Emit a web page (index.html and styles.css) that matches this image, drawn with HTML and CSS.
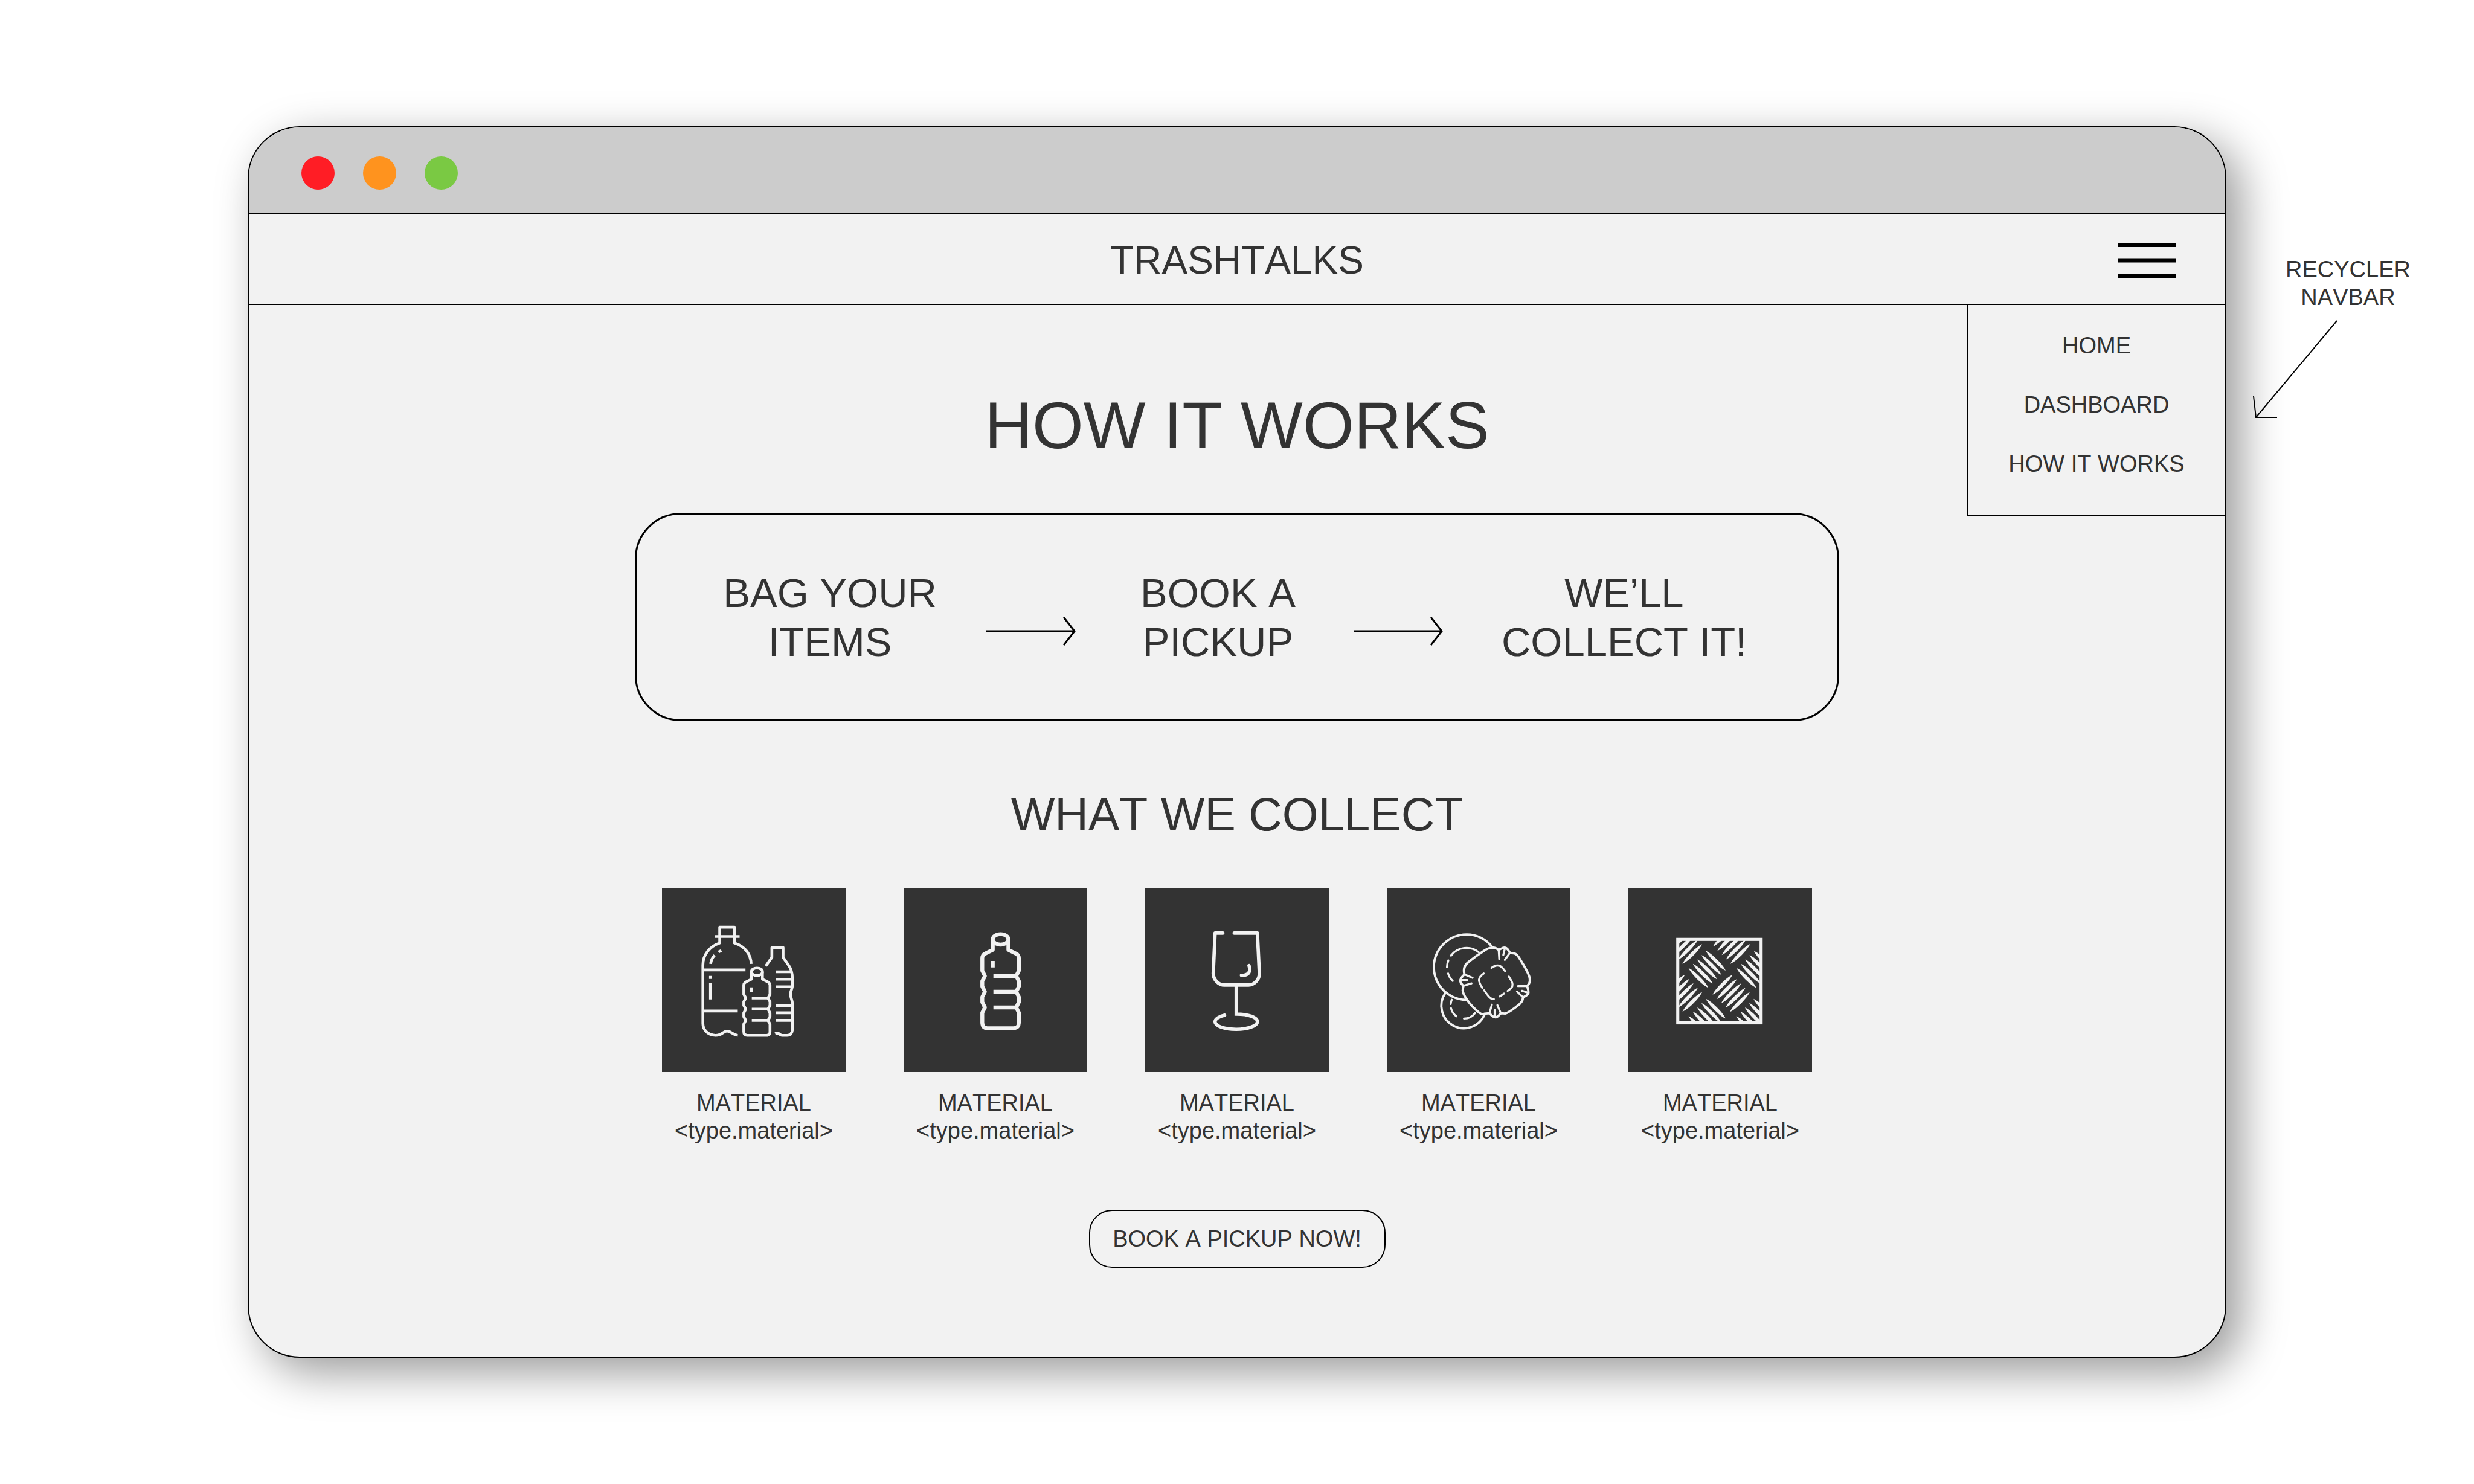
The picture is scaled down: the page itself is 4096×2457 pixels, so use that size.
FILE: index.html
```html
<!DOCTYPE html>
<html lang="en">
<head>
<meta charset="utf-8">
<title>Trashtalks – How it works</title>
<link rel="stylesheet" href="styles.css">
</head>
<body>
<div class="stage">
  <div class="window">
    <div class="titlebar">
      <span class="dot dot-close"></span>
      <span class="dot dot-minimise"></span>
      <span class="dot dot-zoom"></span>
    </div>

    <header class="header">
      <a class="brand" href="#">TRASHTALKS</a>
      <button class="menu-button" type="button" aria-label="Menu" aria-expanded="true">
        <svg viewBox="0 0 96 58" aria-hidden="true"><path d="M0 3.5H96M0 29H96M0 54.5H96"/></svg>
      </button>
      <nav class="menu">
        <a href="#">HOME</a>
        <a href="#">DASHBOARD</a>
        <a href="#">HOW IT WORKS</a>
      </nav>
    </header>

    <main class="main">
      <h1 class="page-title">HOW IT WORKS</h1>

      <div class="steps">
        <p class="step">BAG YOUR<br>ITEMS</p>
        <svg class="step-arrow" viewBox="0 0 148 50" aria-hidden="true"><path d="M0 25H145M128 2L146 25L128 48"/></svg>
        <p class="step">BOOK A<br>PICKUP</p>
        <svg class="step-arrow" viewBox="0 0 148 50" aria-hidden="true"><path d="M0 25H145M128 2L146 25L128 48"/></svg>
        <p class="step">WE’LL<br>COLLECT IT!</p>
      </div>

      <h2 class="section-title">WHAT WE COLLECT</h2>

      <div class="materials">
        <figure class="material">
          <svg class="tile" viewBox="22 19 1190 1190" aria-hidden="true">
            <g stroke-width="18">
              <g stroke-linejoin="round">
                <path d="M600 508C598 445 560 395 492 373V270H396V373C330 395 287 450 287 515V895C287 940 325 971 369 971C415 971 416 944 444 944S478 968 513 971"/>
                <path d="M602 559V607L566 625Q552 633 552 645V705L565 729L552 753V777L565 801L552 826V850L565 874L552 898V948Q552 971 575 971H700Q722 971 722 948V898L709 874L722 850V826L709 801L722 777V753L709 729L722 705V645Q722 633 708 625L673 607V559"/>
                <path d="M695 521L734 466V402H807V466L843 517Q867 552 867 600V650C867 670 855 680 855 705S867 740 867 765V937Q863 971 833 971H800C785 971 785 957 769 957Q760 957 755 959"/>
              </g>
              <ellipse cx="637.500" cy="559" rx="36" ry="24.500"/>
              <path d="M363 330H525M287 547H563M287 813H513M604 729H709M604 801H709M604 874H709M602 660V690"/>
              <path d="M760 559H862M760 607H867M760 656H862M760 777H867M760 825H867M760 874H867"/>
              <path d="M336 586V605M336 634V738M337 508C340 485 350 465 363 452M388 431L407 421"/>
            </g>
          </svg>
          <figcaption>MATERIAL<br>&lt;type.material&gt;</figcaption>
        </figure>

        <figure class="material">
          <svg class="tile" viewBox="24 19 1190 1190" aria-hidden="true">
            <g stroke-width="25">
              <path stroke-linejoin="round" d="M602 349V417L553 441Q534 450 534 470V552L551 586L534 620V654L551 688L534 722V756L551 790L534 824V890Q536 924 566 925H740Q770 922 771 890V824L754 790L771 756V722L754 688L771 654V620L754 586L771 552V470Q771 450 752 441L703 417V349"/>
              <ellipse cx="652.500" cy="349" rx="51" ry="34"/>
              <path d="M606 586H754M606 688H754M606 790H754M602 489V531"/>
            </g>
          </svg>
          <figcaption>MATERIAL<br>&lt;type.material&gt;</figcaption>
        </figure>

        <figure class="material">
          <svg class="tile" viewBox="27 19 1190 1190" aria-hidden="true">
            <g stroke-width="22" stroke-linecap="round">
              <path stroke-linejoin="round" d="M530 308H480L468 570C468 610 504 645 540 645H697C732 645 768 610 767 570L754 308H604"/>
              <path d="M617 645V833C700 833 754 855 754 882S695 932 617 932S480 910 480 882C480 865 505 848 542 840"/>
              <path d="M700 519C712 558 700 582 651 582"/>
            </g>
          </svg>
          <figcaption>MATERIAL<br>&lt;type.material&gt;</figcaption>
        </figure>

        <figure class="material">
          <svg class="tile" viewBox="30 19 1190 1190" aria-hidden="true">
            <g stroke-width="15" stroke-linecap="round" stroke-linejoin="round">
              <path d="M715 400A212 212 0 1 0 548 741M408 698A146 146 0 1 0 663 838"/>
              <path d="M715 403Q690 402 665 420Q610 455 560 495Q520 525 533 576L518 592Q500 612 510 632L526 650L522 680Q522 700 550 741Q580 785 630 825Q645 838 663 831L695 828L712 845Q735 862 753 845L769 828L797 830Q815 826 870 785Q912 757 913 725Q935 715 945 703Q950 695 947 680L940 652L952 635Q960 620 955 595Q945 560 895 480Q875 445 858 440L828 436L815 415Q800 397 780 405L755 417L735 405Q725 402 715 403Z"/>
              <g stroke-width="13">
                <path d="M446 454A126 126 0 0 1 625 432M429 485Q420 510 420 530M427 570Q437 600 457 618M451 740Q445 755 444 768M446 795Q455 830 481 847M530 862Q575 862 602 826"/>
                <path d="M755 417L759 478M796 405L785 450M828 436L795 482M533 576L586 598M510 613H552M526 650L579 634M880 652H940M906 682L945 695M874 687L913 724M695 828L711 772M729 850V806M769 828L747 776"/>
                <path d="M708 534Q740 510 765 522Q775 527 798 556M821 590L838 618Q852 645 838 662Q830 673 813 683M790 700L762 719M724 736Q705 736 690 718Q675 700 661 679M649 663Q628 630 627 612Q628 590 658 570"/>
              </g>
            </g>
          </svg>
          <figcaption>MATERIAL<br>&lt;type.material&gt;</figcaption>
        </figure>

        <figure class="material">
          <svg class="tile" viewBox="32 19 1190 1190" aria-hidden="true">
            <defs>
              <path id="rib" d="M-64 64C-47 25 25 -47 64 -64C47 -25 -25 47 -64 64Z"/>
              <g id="ribs">
                <use href="#rib" x="-56" y="-56"/><use href="#rib" x="-28" y="-28"/><use href="#rib"/><use href="#rib" x="28" y="28"/><use href="#rib" x="56" y="56"/>
              </g>
              <clipPath id="plate"><rect x="352" y="349" width="540" height="541"/></clipPath>
            </defs>
            <g class="ribs" clip-path="url(#plate)">
              <use href="#ribs" x="390" y="388"/>
              <use href="#ribs" x="701" y="387"/>
              <use href="#ribs" x="698" y="699"/>
              <use href="#ribs" x="390" y="698"/>
              <use href="#ribs" transform="translate(542 543) scale(-1 1)"/>
              <use href="#ribs" transform="translate(853 543) scale(-1 1)"/>
              <use href="#ribs" transform="translate(542 854) scale(-1 1)"/>
              <use href="#ribs" transform="translate(851 854) scale(-1 1)"/>
            </g>
            <rect stroke-width="20" x="352" y="349" width="540" height="541"/>
          </svg>
          <figcaption>MATERIAL<br>&lt;type.material&gt;</figcaption>
        </figure>
      </div>

      <button class="book-button" type="button">BOOK A PICKUP NOW!</button>
    </main>
  </div>

  <aside class="note">
    <p>RECYCLER<br>NAVBAR</p>
    <svg class="note-arrow" viewBox="0 0 144 166" aria-hidden="true"><path d="M140 2L6 162M2 127L6 162H41"/></svg>
  </aside>
</div>
</body>
</html>
```
FILE: styles.css
```css
* {
  box-sizing: border-box;
  margin: 0;
  padding: 0;
}

body {
  background: #fff;
  color: #333;
  font-family: "Liberation Sans", Arial, sans-serif;
  font-size: 38px;
  font-kerning: none;
  line-height: 46px;
}

a {
  color: inherit;
  text-decoration: none;
}

button {
  background: none;
  border: 0;
  color: inherit;
  font: inherit;
  font-kerning: inherit;
}

svg {
  display: block;
  fill: none;
  stroke: #000;
}

.stage {
  display: grid;
  grid-template-columns: 410fr 3276fr 410fr;
  padding: 209px 0;
}

/* Browser window */
.window {
  grid-column: 2;
  background: #f2f2f2;
  border: 2px solid #000;
  border-radius: 86px;
  box-shadow: 24px 24px 74px rgba(0, 0, 0, 0.4);
}

.titlebar {
  display: flex;
  align-items: center;
  gap: 47px;
  height: 143px;
  padding: 10px 87px 0;
  background: #ccc;
  border-bottom: 2px solid #000;
  border-radius: 84px 84px 0 0;
}

.dot {
  width: 55px;
  height: 55px;
  border-radius: 50%;
}

.dot-close { background: #ff1d25; }
.dot-minimise { background: #ff931e; }
.dot-zoom { background: #7ac943; }

.header {
  position: relative;
  display: grid;
  grid-template-columns: 1fr auto 1fr;
  align-items: center;
  height: 151px;
  padding: 5px 82px 0;
  border-bottom: 2px solid #000;
}

.brand {
  grid-column: 2;
  font-size: 64px;
  line-height: 80px;
}

.menu-button {
  justify-self: end;
  width: 96px;
  cursor: pointer;
}

.menu-button svg {
  width: 96px;
  height: 58px;
  stroke-width: 7px;
}

.menu {
  position: absolute;
  top: 100%;
  right: 0;
  display: flex;
  flex-direction: column;
  align-items: center;
  gap: 52px;
  width: 428px;
  height: 351px;
  padding-top: 44px;
  background: #f2f2f2;
  border: 2px solid #000;
  border-right: 0;
}

/* Page content */
.main {
  display: flex;
  flex-direction: column;
  align-items: center;
  padding: 134px 0 147px;
}

.page-title {
  font-size: 109px;
  font-weight: 400;
  line-height: 130px;
}

.steps {
  display: grid;
  grid-template-columns: 440fr 226fr 392fr 205fr 542fr;
  align-items: center;
  justify-items: center;
  width: 1994px;
  max-width: 100%;
  height: 345px;
  margin-top: 80px;
  padding: 0 82px 0 100px;
  border: 3px solid #000;
  border-radius: 76px;
}

.step {
  font-size: 67px;
  line-height: 81px;
  text-align: center;
}

.step-arrow {
  width: 148px;
  height: 50px;
  margin-top: 46px;
  stroke-width: 3px;
}

.section-title {
  margin-top: 108px;
  font-size: 77px;
  font-weight: 400;
  line-height: 92px;
}

.materials {
  display: flex;
  flex-wrap: wrap;
  justify-content: center;
  gap: 96px;
  margin-top: 77px;
}

.material {
  width: 304px;
  text-align: center;
}

.tile {
  width: 304px;
  height: 304px;
  margin-bottom: 28px;
  background: #333;
  stroke: #f2f2f2;
}

.ribs {
  fill: #f2f2f2;
  stroke: none;
}

.book-button {
  width: 491px;
  height: 96px;
  margin-top: 108px;
  border: 2px solid #000;
  border-radius: 38px;
  cursor: pointer;
}

/* Annotation beside the window */
.note {
  padding: 214px 7px 0 0;
  text-align: center;
}

.note-arrow {
  width: 144px;
  height: 166px;
  margin: 14px 0 0 43px;
  stroke-width: 2px;
}
```
